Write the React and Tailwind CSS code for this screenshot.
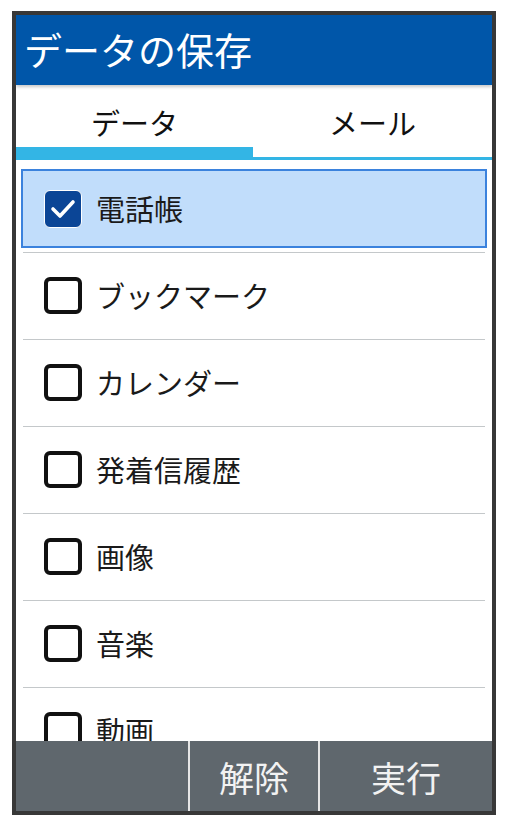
import React from 'react';

const font = { fontFamily: '"Noto Sans CJK JP", "Noto Sans", sans-serif' };

const items = [
  { label: '電話帳', checked: true },
  { label: 'ブックマーク', checked: false },
  { label: 'カレンダー', checked: false },
  { label: '発着信履歴', checked: false },
  { label: '画像', checked: false },
  { label: '音楽', checked: false },
  { label: '動画', checked: false },
];

function CheckBox({ checked }) {
  if (checked) {
    return (
      <div className="w-[38px] h-[38px] shrink-0 rounded-[6px] bg-[#0b4596] border border-white flex items-center justify-center">
        <svg width="26" height="22" viewBox="0 0 26 22">
          <polyline points="3,11 10,18 23,4" fill="none" stroke="white" strokeWidth="3.6" strokeLinecap="round" strokeLinejoin="round" />
        </svg>
      </div>
    );
  }
  return <div className="w-[38px] h-[37px] shrink-0 rounded-[6px] border-[4px] border-[#111]" />;
}

export default function App() {
  return (
    <div className="w-[507px] h-[826px] bg-white pt-[11px] pl-[12px]" style={font}>
      <div className="w-[484px] h-[804px] border-4 border-[#383838] flex flex-col overflow-hidden">
        {/* header */}
        <div className="relative z-10 h-[70px] shrink-0 bg-[#0056a9] text-white text-[38px] leading-none pl-[8px] flex items-center pb-[3px] shadow-[0_2px_3px_rgba(0,0,0,0.22)]">
          データの保存
        </div>

        {/* tabs */}
        <div className="h-[75px] shrink-0 flex">
          <div className="w-[237px] flex flex-col">
            <div className="flex-1 flex justify-center pt-[23px] text-[29px] leading-none text-[#111]">データ</div>
            <div className="h-[13px] bg-[#33b5e5]" />
          </div>
          <div className="flex-1 flex flex-col">
            <div className="flex-1 flex justify-center pt-[23px] text-[29px] leading-none text-[#111]">メール</div>
            <div className="h-[3px] bg-[#33b5e5]" />
          </div>
        </div>

        {/* list */}
        <div className="flex-1 overflow-hidden pt-[6px]">
          {items.map((it, i) => (
            <div key={i} className="h-[87px] flex flex-col">
              <div className="h-[86px] px-[5px] pt-[3px] pb-[4px]">
                <div className={`h-full flex items-center pl-[21px] border-2 ${it.checked ? 'border-[#3b82dd] bg-[#c1ddfb]' : 'border-transparent'}`}>
                  <CheckBox checked={it.checked} />
                  <span className="ml-[14px] text-[29px] leading-none text-[#1a1a1a]">{it.label}</span>
                </div>
              </div>
              <div className="h-px mx-[7px] bg-[#c4c8ca]" />
            </div>
          ))}
        </div>

        {/* bottom bar */}
        <div className="h-[70px] shrink-0 flex bg-[#5f676d] text-[#f2f2f2] text-[35px] leading-none">
          <div className="w-[172px]" />
          <div className="w-[2px] bg-[#e6e6e6]" />
          <div className="w-[128px] flex items-center justify-center">解除</div>
          <div className="w-[2px] bg-[#e6e6e6]" />
          <div className="flex-1 flex items-center justify-center">実行</div>
        </div>
      </div>
    </div>
  );
}
